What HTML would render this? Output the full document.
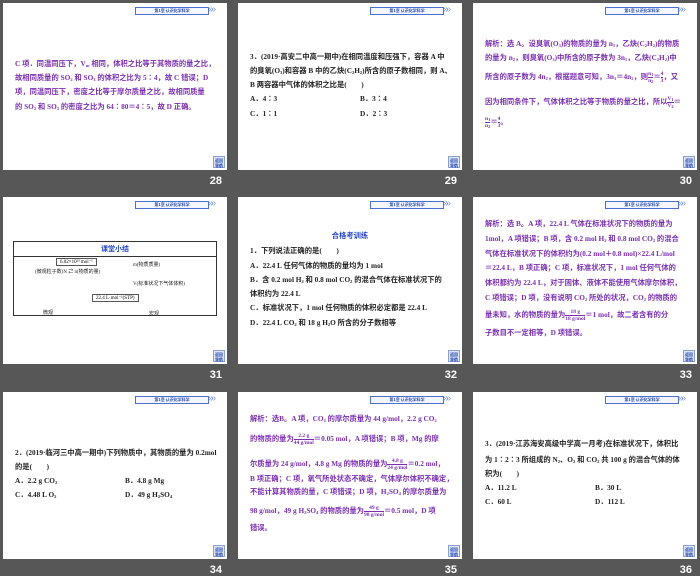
<!DOCTYPE html>
<html><head><meta charset="utf-8"><style>
*{margin:0;padding:0;box-sizing:border-box}
body{width:700px;height:576px;background:#575757;position:relative;overflow:hidden;font-family:"Liberation Serif","Noto Sans CJK SC",serif}
.s{position:absolute;width:224px;height:167px;background:#fff;overflow:hidden}
.n{position:absolute;color:#fff;font:bold 11px "Liberation Sans",sans-serif;width:30px;text-align:right}
.hb{position:absolute;left:132px;top:4px;width:74px;height:8px;border:1px solid #4a6fd0;background:#f4f7ff;color:#2346b0;font:bold 4px "Noto Sans CJK SC",sans-serif;text-align:center;line-height:6px}
.ch{position:absolute;left:205px;top:2px;color:#7a96d8;font:10px "Liberation Sans",sans-serif;line-height:10px;letter-spacing:-3px}
.bt{position:absolute;left:210px;top:153px;width:12px;height:12px;background:#dfe6f4;border:1px solid #8aa0d0;color:#2346b0;font:bold 4px sans-serif;line-height:5px;text-align:center;padding-top:1px}
.l{position:absolute;left:12px;white-space:nowrap;font-size:7.3px;font-weight:bold;line-height:9px;color:#222}
.p{color:#7a2fb0}
.f{display:inline-block;vertical-align:middle;text-align:center;font-size:5.5px;line-height:6px}
.f i{display:block;font-style:normal;border-top:0.6px solid currentColor}
sub{font-size:4.5px;vertical-align:-1px;line-height:0}
</style></head><body>

<!-- 28 -->
<div class="s" style="left:3px;top:3px">
<div class="hb">第1章 认识化学科学</div><div class="ch">»»</div><div class="bt">返回<br>导航</div>
<div class="l p" style="top:56px">C 项．同温同压下，V<sub>m</sub> 相同，体积之比等于其物质的量之比，</div>
<div class="l p" style="top:70px">故相同质量的 SO<sub>2</sub> 和 SO<sub>3</sub> 的体积之比为 5∶4，故 C 错误；D</div>
<div class="l p" style="top:84px">项，同温同压下，密度之比等于摩尔质量之比，故相同质量</div>
<div class="l p" style="top:99px">的 SO<sub>2</sub> 和 SO<sub>3</sub> 的密度之比为 64∶80＝4∶5，故 D 正确。</div>
</div><div class="n" style="left:192px;top:175px">28</div>

<!-- 29 -->
<div class="s" style="left:238px;top:3px">
<div class="hb">第1章 认识化学科学</div><div class="ch">»»</div><div class="bt">返回<br>导航</div>
<div class="l" style="top:49px">3．(2019·高安二中高一期中)在相同温度和压强下，容器 A 中</div>
<div class="l" style="top:63px">的臭氧(O<sub>3</sub>)和容器 B 中的乙炔(C<sub>2</sub>H<sub>2</sub>)所含的原子数相同，则 A、</div>
<div class="l" style="top:77px">B 两容器中气体的体积之比是(　　)</div>
<div class="l" style="top:91px">A．4∶3</div><div class="l" style="top:91px;left:122px">B．3∶4</div>
<div class="l" style="top:106px">C．1∶1</div><div class="l" style="top:106px;left:122px">D．2∶3</div>
</div><div class="n" style="left:427px;top:175px">29</div>

<!-- 30 -->
<div class="s" style="left:473px;top:3px">
<div class="hb">第1章 认识化学科学</div><div class="ch">»»</div><div class="bt">返回<br>导航</div>
<div class="l p" style="top:36px">解析：选 A。设臭氧(O<sub>3</sub>)的物质的量为 n<sub>1</sub>，乙炔(C<sub>2</sub>H<sub>2</sub>)的物质</div>
<div class="l p" style="top:50px">的量为 n<sub>2</sub>，则臭氧(O<sub>3</sub>)中所含的原子数为 3n<sub>1</sub>，乙炔(C<sub>2</sub>H<sub>2</sub>)中</div>
<div class="l p" style="top:68px">所含的原子数为 4n<sub>2</sub>，根据题意可知，3n<sub>1</sub>＝4n<sub>2</sub>，则<span class="f">n<sub>1</sub><i>n<sub>2</sub></i></span>＝<span class="f">4<i>3</i></span>，又</div>
<div class="l p" style="top:93px">因为相同条件下，气体体积之比等于物质的量之比，所以<span class="f">V<sub>1</sub><i>V<sub>2</sub></i></span>＝</div>
<div class="l p" style="top:113px"><span class="f">n<sub>1</sub><i>n<sub>2</sub></i></span>＝<span class="f">4<i>3</i></span>。</div>
</div><div class="n" style="left:662px;top:175px">30</div>

<!-- 31 -->
<div class="s" style="left:3px;top:197px">
<div class="hb">第1章 认识化学科学</div><div class="ch">»»</div><div class="bt">返回<br>导航</div>
<div style="position:absolute;left:10px;top:44px;width:204px;height:75px;border:1px solid #333"></div>
<div style="position:absolute;left:10px;top:59px;width:204px;border-top:1px solid #333"></div>
<div style="position:absolute;left:10px;top:47px;width:204px;text-align:center;color:#2346c8;font:bold 7px 'Noto Sans CJK SC',sans-serif">课堂小结</div>
<div style="position:absolute;left:53px;top:61px;border:1px solid #555;font-size:5px;padding:0 3px">6.02×10²³ mol⁻¹</div>
<div class="l" style="top:71px;left:32px;font-size:5px;font-weight:normal">(微观粒子数)N ⇄ n(物质的量)</div>
<div class="l" style="top:64px;left:130px;font-size:5px;font-weight:normal">m(物质质量)</div>
<div class="l" style="top:83px;left:130px;font-size:5px;font-weight:normal">V(标准状况下气体体积)</div>
<div style="position:absolute;left:89px;top:97px;border:1px solid #555;font-size:5px;padding:0 3px">22.4 L·mol⁻¹(STP)</div>
<div class="l" style="top:112px;left:40px;font-size:5px;font-weight:normal">微观</div>
<div class="l" style="top:113px;left:146px;font-size:5px;font-weight:normal">宏观</div>
</div><div class="n" style="left:192px;top:369px">31</div>

<!-- 32 -->
<div class="s" style="left:238px;top:197px">
<div class="hb">第1章 认识化学科学</div><div class="ch">»»</div><div class="bt">返回<br>导航</div>
<div class="l" style="top:34px;left:0;width:224px;text-align:center;color:#2346c8">合格考训练</div>
<div class="l" style="top:49px">1．下列说法正确的是(　　)</div>
<div class="l" style="top:64px">A．22.4 L 任何气体的物质的量均为 1 mol</div>
<div class="l" style="top:78px">B．含 0.2 mol H<sub>2</sub> 和 0.8 mol CO<sub>2</sub> 的混合气体在标准状况下的</div>
<div class="l" style="top:92px">体积约为 22.4 L</div>
<div class="l" style="top:106px">C．标准状况下，1 mol 任何物质的体积必定都是 22.4 L</div>
<div class="l" style="top:121px">D．22.4 L CO<sub>2</sub> 和 18 g H<sub>2</sub>O 所含的分子数相等</div>
</div><div class="n" style="left:427px;top:369px">32</div>

<!-- 33 -->
<div class="s" style="left:473px;top:197px">
<div class="hb">第1章 认识化学科学</div><div class="ch">»»</div><div class="bt">返回<br>导航</div>
<div class="l p" style="top:22px">解析：选 B。A 项，22.4 L 气体在标准状况下的物质的量为</div>
<div class="l p" style="top:37px">1mol，A 项错误；B 项，含 0.2 mol H<sub>2</sub> 和 0.8 mol CO<sub>2</sub> 的混合</div>
<div class="l p" style="top:52px">气体在标准状况下的体积约为(0.2 mol＋0.8 mol)×22.4 L/mol</div>
<div class="l p" style="top:66px">＝22.4 L，B 项正确；C 项，标准状况下，1 mol 任何气体的</div>
<div class="l p" style="top:81px">体积都约为 22.4 L，对于固体、液体不能使用气体摩尔体积，</div>
<div class="l p" style="top:96px">C 项错误；D 项，没有说明 CO<sub>2</sub> 所处的状况，CO<sub>2</sub> 的物质的</div>
<div class="l p" style="top:112px">量未知，水的物质的量为<span class="f">18 g<i>18 g/mol</i></span>＝1 mol，故二者含有的分</div>
<div class="l p" style="top:131px">子数目不一定相等，D 项错误。</div>
</div><div class="n" style="left:662px;top:369px">33</div>

<!-- 34 -->
<div class="s" style="left:3px;top:392px">
<div class="hb">第1章 认识化学科学</div><div class="ch">»»</div><div class="bt">返回<br>导航</div>
<div class="l" style="top:56px">2．(2019·临河三中高一期中)下列物质中，其物质的量为 0.2mol</div>
<div class="l" style="top:70px">的是(　　)</div>
<div class="l" style="top:84px">A．2.2 g CO<sub>2</sub></div><div class="l" style="top:84px;left:122px">B．4.8 g Mg</div>
<div class="l" style="top:98px">C．4.48 L O<sub>2</sub></div><div class="l" style="top:98px;left:122px">D．49 g H<sub>2</sub>SO<sub>4</sub></div>
</div><div class="n" style="left:192px;top:564px">34</div>

<!-- 35 -->
<div class="s" style="left:238px;top:392px">
<div class="hb">第1章 认识化学科学</div><div class="ch">»»</div><div class="bt">返回<br>导航</div>
<div class="l p" style="top:22px">解析：选B。A 项，CO<sub>2</sub> 的摩尔质量为 44 g/mol，2.2 g CO<sub>2</sub></div>
<div class="l p" style="top:41px">的物质的量为<span class="f">2.2 g<i>44 g/mol</i></span>＝0.05 mol，A 项错误；B 项，Mg 的摩</div>
<div class="l p" style="top:66px">尔质量为 24 g/mol，4.8 g Mg 的物质的量为<span class="f">4.8 g<i>24 g/mol</i></span>＝0.2 mol，</div>
<div class="l p" style="top:82px">B 项正确；C 项，氧气所处状态不确定，气体摩尔体积不确定，</div>
<div class="l p" style="top:95px">不能计算其物质的量，C 项错误；D 项，H<sub>2</sub>SO<sub>4</sub> 的摩尔质量为</div>
<div class="l p" style="top:113px">98 g/mol，49 g H<sub>2</sub>SO<sub>4</sub> 的物质的量为<span class="f">49 g<i>98 g/mol</i></span>＝0.5 mol，D 项</div>
<div class="l p" style="top:131px">错误。</div>
</div><div class="n" style="left:427px;top:564px">35</div>

<!-- 36 -->
<div class="s" style="left:473px;top:392px">
<div class="hb">第1章 认识化学科学</div><div class="ch">»»</div><div class="bt">返回<br>导航</div>
<div class="l" style="top:47px">3．(2019·江苏海安高级中学高一月考)在标准状况下，体积比</div>
<div class="l" style="top:63px">为 1∶2∶3 所组成的 N<sub>2</sub>、O<sub>2</sub> 和 CO<sub>2</sub> 共 100 g 的混合气体的体</div>
<div class="l" style="top:77px">积为(　　)</div>
<div class="l" style="top:91px">A．11.2 L</div><div class="l" style="top:91px;left:122px">B．30 L</div>
<div class="l" style="top:105px">C．60 L</div><div class="l" style="top:105px;left:122px">D．112 L</div>
</div><div class="n" style="left:662px;top:564px">36</div>

</body></html>
